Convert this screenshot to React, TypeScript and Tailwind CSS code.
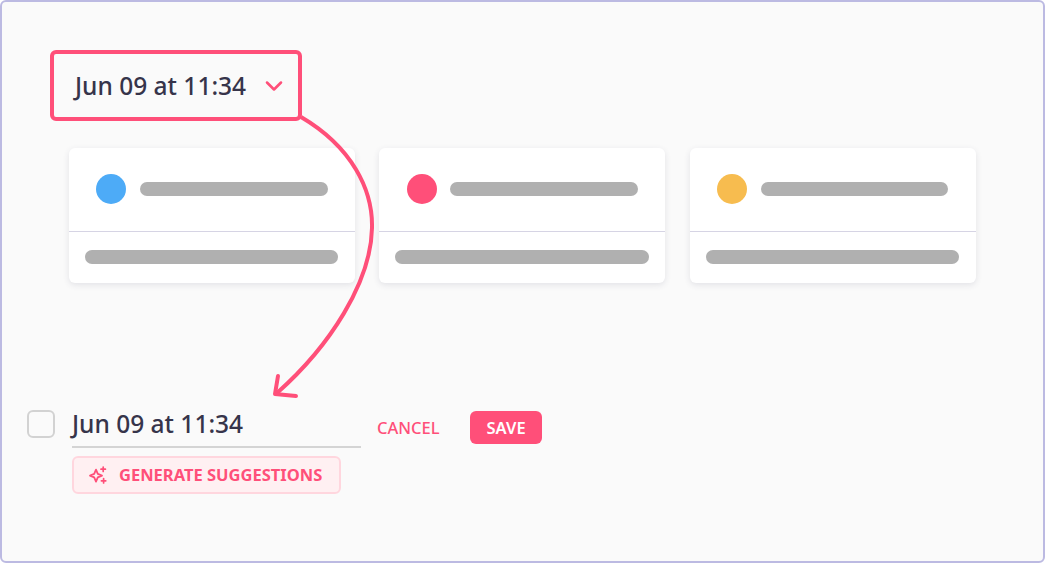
import { ChevronDown } from "lucide-react";

const CARDS = [
  { dot: "bg-[#4dabf7]" },
  { dot: "bg-[#ff4f79]" },
  { dot: "bg-[#f7bc4f]" },
];

function Card({ dot }: { dot: string }) {
  return (
    <div className="w-[286px] h-[135px] rounded-md bg-white shadow-[0_2px_6px_rgba(60,60,90,0.12)]">
      <div className="h-[84px] flex items-center pl-[27.4px] pr-[27.5px] pb-[1px] gap-[13.6px] border-b border-[#d6d4e4]">
        <div className={`w-[30px] h-[30px] rounded-full ${dot}`} />
        <div className="flex-1 h-[14px] rounded-full bg-[#b0b0b0]" />
      </div>
      <div className="pt-[18px] pl-[16px] pr-[16.6px]">
        <div className="h-[14px] rounded-full bg-[#b0b0b0]" />
      </div>
    </div>
  );
}

function Sparkles() {
  return (
    <svg width="20" height="20" viewBox="0 0 20 20" fill="none" className="text-[#ff4f79]">
      <path
        d="M8 4.6 L9.8 8.8 L14 10.6 L9.8 12.4 L8 16.6 L6.2 12.4 L2 10.6 L6.2 8.8 Z"
        stroke="currentColor"
        strokeWidth="1.8"
        strokeLinejoin="round"
      />
      <path d="M15.2 2 V6.4 M13 4.2 H17.4" stroke="currentColor" strokeWidth="1.7" strokeLinecap="round" />
      <path d="M15.6 13.6 V18 M13.4 15.8 H17.8" stroke="currentColor" strokeWidth="1.7" strokeLinecap="round" />
    </svg>
  );
}

export default function App() {
  return (
    <div className="relative w-[1045px] h-[563px] bg-white font-['Noto_Sans',sans-serif]">
      <div className="w-[1045px] h-[563px] rounded-md border-2 border-[#bcbae2] bg-[#fafafa] pt-[48px] pl-[48px]">
        <div className="w-[252px] h-[71px] flex items-center pl-[21px] rounded-md border-[4px] border-[#ff4f79] text-[#36344a] text-[24.5px] font-medium">
          <span className="pt-[2px]">Jun 09 at 11:34</span>
          <ChevronDown className="ml-[14px] text-[#ff4f79]" size={28} strokeWidth={2.2} />
        </div>

        <div className="flex gap-[24.4px] mt-[27px] ml-[19px]">
          {CARDS.map((c, i) => (
            <Card key={i} dot={c.dot} />
          ))}
        </div>

        <div className="flex mt-[126px] -ml-[23px]">
          <div className="mt-[1px] w-[28px] h-[28px] rounded-md border-2 border-[#d2d2d2] bg-[#fafafa]" />
          <div className="ml-[17px]">
            <div className="w-[289px] h-[39px] border-b-2 border-[#d4d4d4] text-[24.5px] leading-[30px] text-[#36344a] font-medium">
              Jun 09 at 11:34
            </div>
            <div className="mt-[8px] w-[269px] h-[38px] flex items-center pl-[14px] gap-[11px] rounded-md border-2 border-[#ffd6de] bg-[#fff0f2] text-[#ff4f79] text-[16.5px] font-bold">
              <Sparkles />
              <span>GENERATE SUGGESTIONS</span>
            </div>
          </div>
          <div className="ml-[16px] mt-[2px] h-[33px] flex items-center gap-[30.5px] text-[16.5px] font-medium">
            <span className="pt-[1px] text-[#ff4f79]">CANCEL</span>
            <span className="w-[72px] h-[33px] pt-[1px] flex items-center justify-center rounded-md bg-[#ff4f79] text-white font-semibold">
              SAVE
            </span>
          </div>
        </div>
      </div>

      {/* curved arrow from the dropdown down to the edited title */}
      <svg className="absolute left-0 top-0 pointer-events-none" width="1045" height="563" fill="none">
        <path
          d="M301 117 C 352 147, 373 190, 372 228 C 371 282, 330 346, 277 393"
          stroke="#ff4f79"
          strokeWidth="4"
        />
        <path
          d="M278 376 L275 394 L296 396"
          stroke="#ff4f79"
          strokeWidth="4"
          strokeLinecap="round"
          strokeLinejoin="round"
        />
      </svg>
    </div>
  );
}
